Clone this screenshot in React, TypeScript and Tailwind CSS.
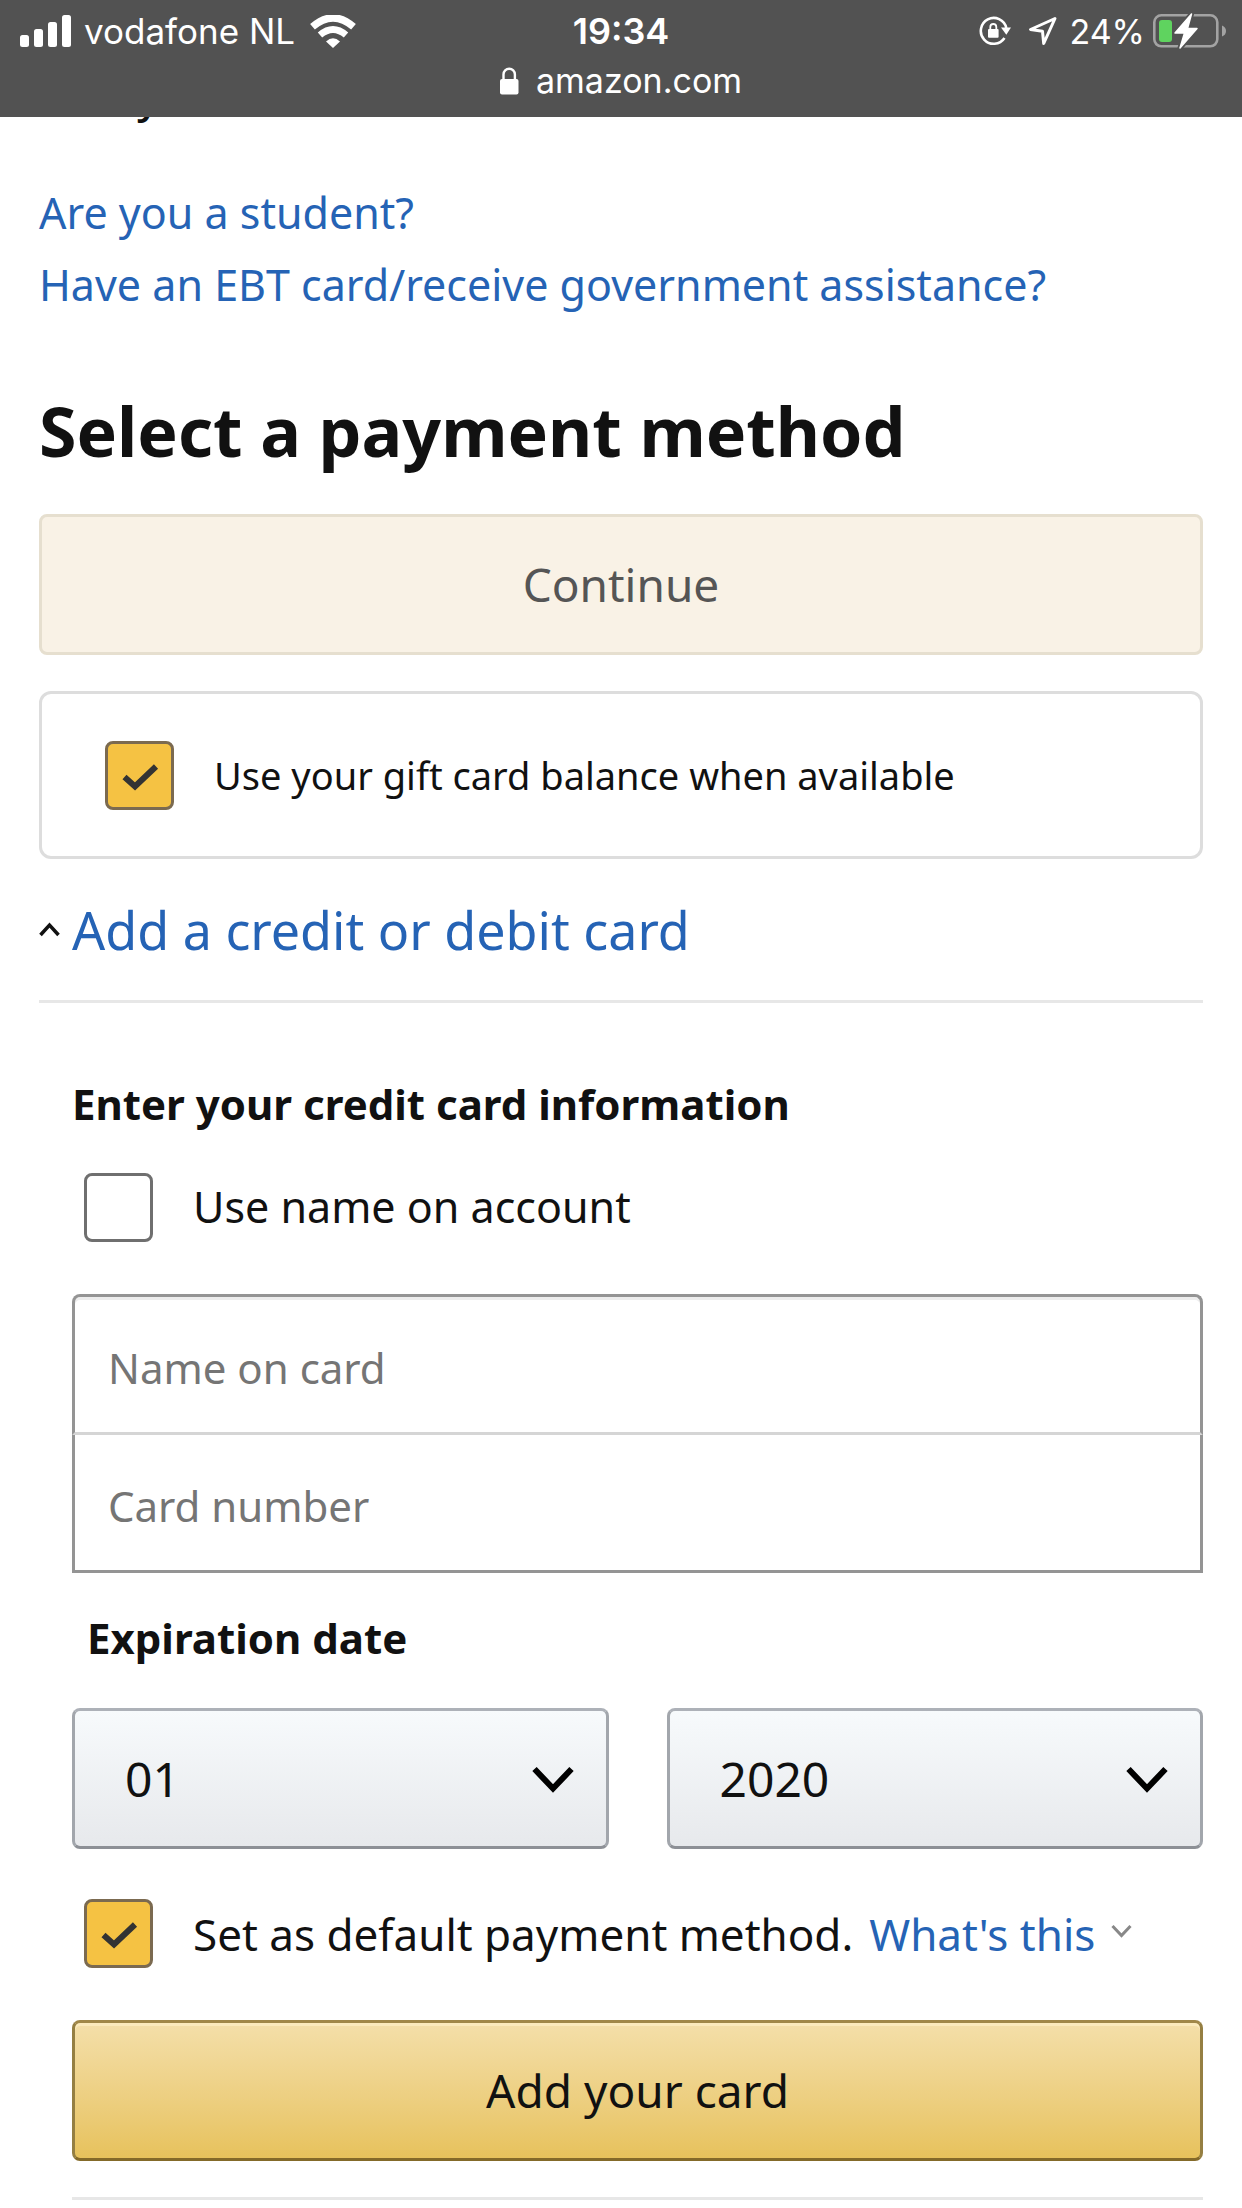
import { useId, useState } from "react";
import type { ReactNode } from "react";

function SignalIcon() {
  return (
    <svg className="h-[32px] w-[51px]" viewBox="0 0 51 32" fill="#fff" aria-hidden="true">
      <rect x="0" y="20" width="9" height="12" rx="2.5" />
      <rect x="14" y="14" width="9" height="18" rx="2.5" />
      <rect x="28" y="7" width="9" height="25" rx="2.5" />
      <rect x="42" y="0" width="9" height="32" rx="2.5" />
    </svg>
  );
}

function WifiIcon() {
  return (
    <svg className="h-[33px] w-[46px]" viewBox="0 0 46 33" aria-hidden="true">
      <path d="M2.5 11.8Q23 -6 43.500 11.800" fill="none" stroke="#fff" strokeWidth="7.2" />
      <path d="M10 20Q23 9 36 20" fill="none" stroke="#fff" strokeWidth="6.8" />
      <path d="M16 26.500Q23 20 30 26.500L23 33Z" fill="#fff" />
    </svg>
  );
}

function RotationLockIcon() {
  return (
    <svg className="h-[30px] w-[32px]" viewBox="0 0 32 30" aria-hidden="true">
      <path d="M27.300 12A12.900 12.900 0 1 0 25.500 22" fill="none" stroke="#fff" strokeWidth="2.6" />
      <path d="M22 11.500H32L27.300 18.800Z" fill="#fff" />
      <rect x="9" y="13" width="10.600" height="8.800" rx="1" fill="#fff" />
      <path d="M11.300 14V11a3 3 0 0 1 6 0V14" fill="none" stroke="#fff" strokeWidth="1.8" />
    </svg>
  );
}

function LocationIcon() {
  return (
    <svg className="h-[30px] w-[29px]" viewBox="0 0 29 30" aria-hidden="true">
      <path
        d="M27 2.5L2.5 13.5L14.500 15.300L15.700 27.500Z"
        fill="none"
        stroke="#fff"
        strokeWidth="3"
        strokeLinejoin="round"
      />
    </svg>
  );
}

function BatteryIcon() {
  return (
    <svg className="h-[36px] w-[73px]" viewBox="0 0 73 36" aria-hidden="true">
      <rect x="1.3" y="2.3" width="63" height="31" rx="7" fill="none" stroke="#a3a3a3" strokeWidth="2.6" />
      <path d="M69 12.500Q73 14 73 18T69 23.500Z" fill="#a3a3a3" />
      <rect x="6" y="7" width="13" height="22" rx="3" fill="#5fd35f" />
      <path
        d="M38.500 1L22 20H31.500L27 35L44 15.500H34.500Z"
        fill="#525252"
        stroke="#525252"
        strokeWidth="5"
        strokeLinejoin="round"
      />
      <path
        d="M38.500 1L22 20H31.500L27 35L44 15.500H34.500Z"
        fill="#fff"
        stroke="#fff"
        strokeWidth="1.5"
        strokeLinejoin="round"
      />
    </svg>
  );
}

function PadlockIcon() {
  return (
    <svg className="h-[28px] w-[19px]" viewBox="0 0 19 28" aria-hidden="true">
      <rect x="0" y="12" width="18.500" height="15.500" rx="2" fill="#fff" />
      <path d="M3.500 13V7.500a5.700 5.700 0 0 1 11.400 0V13" fill="none" stroke="#fff" strokeWidth="2.400" />
    </svg>
  );
}

function StatusBar() {
  return (
    <header className="sticky top-0 z-10 bg-[#525252] pb-[17px] font-['Inter',sans-serif] text-white">
      <div className="grid h-[62px] grid-cols-[1fr_auto_1fr] items-center px-4 text-[35px]">
        <div className="flex items-center pl-1">
          <SignalIcon />
          <span className="ml-[13px]">vodafone NL</span>
          <span className="ml-[15px]">
            <WifiIcon />
          </span>
        </div>
        <time className="text-[36px] font-semibold">19:34</time>
        <div className="flex items-center justify-end">
          <RotationLockIcon />
          <span className="ml-[17px]">
            <LocationIcon />
          </span>
          <span className="ml-3 text-[34px]">24%</span>
          <span className="ml-2">
            <BatteryIcon />
          </span>
        </div>
      </div>
      <div className="flex items-center justify-center gap-[17px] text-[34px] leading-[38px]">
        <PadlockIcon />
        <span>amazon.com</span>
      </div>
    </header>
  );
}

function Checkbox({
  defaultChecked,
  textClass,
  children,
}: {
  defaultChecked?: boolean;
  textClass: string;
  children: ReactNode;
}) {
  const id = useId();
  return (
    <div className="flex items-center gap-10">
      <span className="grid h-[69px] w-[69px] shrink-0">
        <input
          id={id}
          type="checkbox"
          defaultChecked={defaultChecked}
          className="peer col-start-1 row-start-1 m-0 h-full w-full appearance-none rounded-[8px] border-[3px] border-[#6f6f6f] bg-white checked:border-[#7b6a50] checked:bg-[#f5c243]"
        />
        <svg
          viewBox="0 0 69 69"
          className="pointer-events-none invisible col-start-1 row-start-1 h-full w-full peer-checked:visible"
          aria-hidden="true"
        >
          <path d="M19.500 36L30 45.500L51 25.500" fill="none" stroke="#333" strokeWidth="6" />
        </svg>
      </span>
      <label htmlFor={id} className={textClass}>
        {children}
      </label>
    </div>
  );
}

function Dropdown({ label, options }: { label: string; options: string[] }) {
  return (
    <div className="grid items-center">
      <select
        aria-label={label}
        className="col-start-1 row-start-1 h-[141px] w-full appearance-none rounded-[8px] border-[3px] border-[#a2a6ac] border-t-[#adb1b8] border-b-[#8d9096] bg-linear-to-b from-[#f7fafc] to-[#e7e9ec] pl-[50px] text-[48px] text-[#111]"
      >
        {options.map((o) => (
          <option key={o}>{o}</option>
        ))}
      </select>
      <svg
        viewBox="0 0 42 28"
        className="pointer-events-none col-start-1 row-start-1 mr-[35px] h-[28px] w-[42px] justify-self-end"
        aria-hidden="true"
      >
        <path d="M2.500 4L21 23.500L39.500 4" fill="none" stroke="#000" strokeWidth="6" />
      </svg>
    </div>
  );
}

export default function App() {
  const [open, setOpen] = useState(true);
  return (
    <div className="min-h-screen bg-white font-['Noto_Sans',sans-serif] text-[43px] text-[#111]">
      <StatusBar />
      <main className="px-[39px] pb-2">
        <p className="-mt-[50px] pl-[98px] leading-[60px] font-medium">y</p>
        <nav className="mt-[50px] flex flex-col items-start leading-[72px] text-[#2563b5]">
          <a href="#student">Are you a student?</a>
          <a href="#ebt">Have an EBT card/receive government assistance?</a>
        </nav>

        <h1 className="mt-[68px] text-[68px] leading-[84px] font-bold">Select a payment method</h1>
        <button
          type="button"
          disabled
          className="mt-[41px] h-[141px] w-full rounded-[8px] border-[3px] border-[#e6dfcf] bg-[#f9f2e6] text-[46px] text-[#555]"
        >
          Continue
        </button>

        <section className="mt-9 flex h-[168px] items-center rounded-[12px] border-[3px] border-[#ddd] pl-[63px]">
          <Checkbox defaultChecked textClass="text-[38px]">
            Use your gift card balance when available
          </Checkbox>
        </section>

        <button
          type="button"
          aria-expanded={open}
          onClick={() => setOpen(!open)}
          className="flex w-full items-center gap-3 border-b-[3px] border-[#e7e7e7] py-[34px] text-left text-[52px] leading-[73px] text-[#2563b5]"
        >
          <svg viewBox="0 0 21 16" className="h-4 w-[21px]" aria-hidden="true">
            <path d="M1.500 13L10.500 3L19.500 13" fill="none" stroke="#111" strokeWidth="3.500" />
          </svg>
          Add a credit or debit card
        </button>

        {open && (
          <form className="ml-[33px]" onSubmit={(e) => e.preventDefault()}>
            <h2 className="mt-[71px] text-[42px] leading-[60px] font-bold">Enter your credit card information</h2>
            <div className="mt-[39px] pl-3">
              <Checkbox textClass="">Use name on account</Checkbox>
            </div>

            <div className="mt-[52px] flex flex-col">
              <input
                type="text"
                aria-label="Name on card"
                placeholder="Name on card"
                className="h-[141px] w-full rounded-t-[8px] border-[3px] border-[#949494] border-b-[#d5d5d5] bg-white px-[33px] pt-[6px] text-[42px] shadow-[inset_0_3px_0_#ededed] placeholder:text-[#757575]"
              />
              <input
                type="text"
                inputMode="numeric"
                aria-label="Card number"
                placeholder="Card number"
                className="h-[138px] w-full border-x-[3px] border-b-[3px] border-[#949494] bg-white px-[33px] pt-[6px] text-[42px] placeholder:text-[#757575]"
              />
            </div>

            <h3 className="mt-[35px] ml-[15px] text-[42px] leading-[60px] font-bold">Expiration date</h3>
            <div className="mt-10 grid grid-cols-2 gap-[58px]">
              <Dropdown label="Expiration month" options={["01", "02", "03", "04", "05", "06", "07", "08", "09", "10", "11", "12"]} />
              <Dropdown label="Expiration year" options={["2020", "2021", "2022", "2023", "2024", "2025"]} />
            </div>

            <div className="mt-[50px] flex items-center gap-4 pl-3 text-[44px]">
              <Checkbox defaultChecked textClass="whitespace-nowrap">
                Set as default payment method.
              </Checkbox>
              <a href="#default" className="flex items-center gap-4 whitespace-nowrap text-[#2563b5]">
                What's this
                <svg viewBox="0 0 21 20" className="h-5 w-[21px]" aria-hidden="true">
                  <path d="M1.500 2L10.500 11.500L19.500 2" fill="none" stroke="#888" strokeWidth="3" />
                </svg>
              </a>
            </div>

            <button
              type="submit"
              className="mt-[52px] h-[141px] w-full rounded-[8px] border-[3px] border-[#957f42] border-t-[#a08748] border-b-[#846a29] bg-linear-to-b from-[#f4dfa9] to-[#e7c25c] text-[46px] shadow-[inset_0_3px_0_#fbeabc]"
            >
              Add your card
            </button>
            <hr className="mt-9 border-t-[3px] border-[#e7e7e7]" />
          </form>
        )}
      </main>
    </div>
  );
}
